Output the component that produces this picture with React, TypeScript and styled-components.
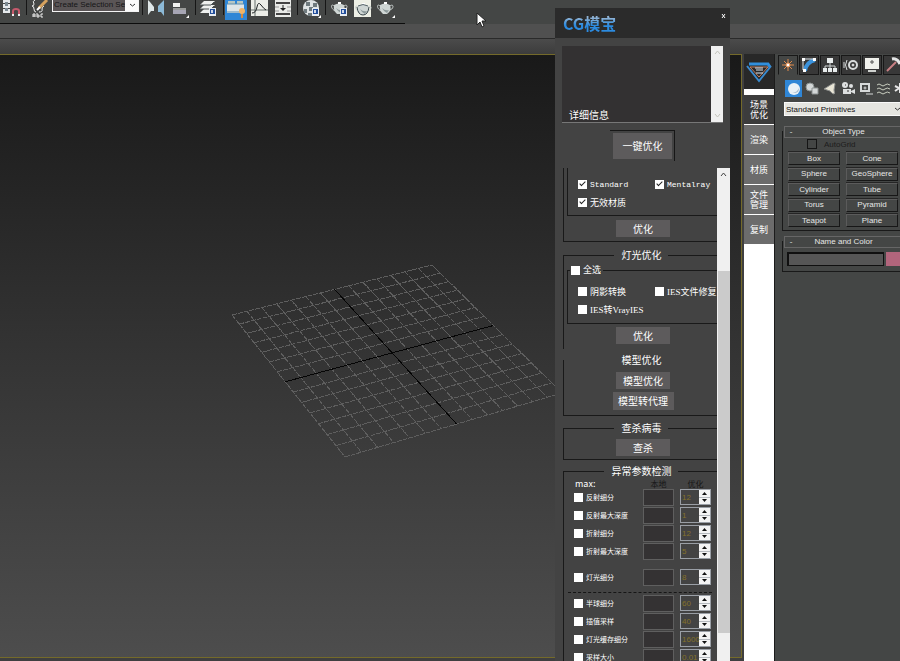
import React, { useState } from "react";
import styled, { createGlobalStyle, css } from "styled-components";

const sans = `"Liberation Sans", "Noto Sans CJK SC", sans-serif`;
const cjk = `"Noto Sans CJK SC", "Liberation Sans", sans-serif`;

const GlobalStyle = createGlobalStyle`
  *, *::before, *::after { box-sizing: border-box; }
  html, body { margin: 0; overflow: hidden; background: #444645; }
  body { font-family: ${sans}; font-size: 8px; color: #e6e6e6; }
  button, input, select { font: inherit; color: inherit; margin: 0; padding: 0; border: 0; border-radius: 0; min-width: 0; }
  fieldset { min-width: 0; margin: 0; padding: 0; }
  svg { display: block; flex: none; }
`;

const Shell = styled.div`
  position: relative;
  display: flex;
  flex-direction: column;
  height: 100vh;
  overflow: hidden;
`;

/* ---------- top bars ---------- */

const Toolbar = styled.header`
  display: flex;
  align-items: flex-start;
  height: 24px;
  background: #444645;
`;

const Tools = styled.div`
  display: flex;
  height: 24px;
  padding-right: 7px;
  border-bottom: 1px solid #0c0c0c;
`;

const Tool = styled.button<{ $w: number; $active?: boolean }>`
  display: flex;
  justify-content: center;
  width: ${(p) => p.$w}px;
  height: 20px;
  background: ${(p) => (p.$active ? "#2f86d6" : "transparent")};
`;

const Divider = styled.span<{ $w: number }>`
  width: ${(p) => p.$w}px;
  height: 15px;
  background: linear-gradient(#161616, #161616) center / 1px 100% no-repeat;
`;

const SelectWrap = styled.label`
  position: relative;
  display: block;
`;

const SetSelect = styled.select`
  appearance: none;
  display: block;
  width: 87px;
  height: 12px;
  padding: 0 13px 2px 1px;
  border: 1px solid #f4f4f4;
  border-top: 0;
  background: linear-gradient(90deg, #5a5556 72px, #fbfbfb 72px);
  color: #161616;
  line-height: 10px;
`;

const Chevron = styled.svg<{ $top: number; $right: number }>`
  position: absolute;
  top: ${(p) => p.$top}px;
  right: ${(p) => p.$right}px;
  pointer-events: none;
`;

const Ribbon = styled.div`
  height: 15px;
  background: #505050;
  border-bottom: 1px solid #2a2a2a;
`;

const RibbonFade = styled.div`
  height: 15px;
  background: linear-gradient(#4b4b4b, #3c3c3c);
`;

/* ---------- main row ---------- */

const Main = styled.main`
  flex: 1;
  display: flex;
  min-height: 0;
`;

const ViewColumn = styled.div`
  flex: 1;
  display: flex;
  padding: 0 2px 3px 0;
  background: #3f3f40;
`;

const Viewport = styled.section`
  flex: 1;
  overflow: hidden;
  border: solid #746a2a;
  border-width: 1px 1px 1px 0;
  background: linear-gradient(#191919, #343434 50%, #4d4d4d);
`;

const TabStrip = styled.nav`
  display: flex;
  flex-direction: column;
  gap: 1px;
  width: 30px;
  background: #fff;
`;

const StripLogo = styled.div`
  display: flex;
  justify-content: center;
  align-items: center;
  height: 35px;
  margin-bottom: 5px;
  background: #282828;
`;

const StripTab = styled.button<{ $active?: boolean }>`
  height: 29px;
  padding: 0 5px;
  background: ${(p) => (p.$active ? "#3c3c3c" : "#6c6c6c")};
  color: #fff;
  font-family: ${cjk};
  font-size: 9px;
  line-height: 10px;
`;

const CommandPanel = styled.aside`
  width: 126px;
  overflow: hidden;
  border-left: 1px solid #1c1c1c;
  background: #444645;
`;

const PanelTabs = styled.div`
  display: flex;
  gap: 1px;
  height: 21px;
  padding: 1px 0 0 3px;
`;

const PanelTab = styled.button<{ $active?: boolean }>`
  flex: none;
  display: flex;
  align-items: center;
  justify-content: center;
  width: 20px;
  background: ${(p) => (p.$active ? "#444645" : "#383838")};
  border: 1px solid #181818;
  ${(p) => p.$active && css`border-bottom-color: #444645;`}
`;

const Categories = styled.div`
  display: flex;
  gap: 1px;
  padding: 5px 0 5px 10px;
`;

const Category = styled.button<{ $active?: boolean }>`
  flex: none;
  display: flex;
  align-items: center;
  justify-content: center;
  width: 17px;
  height: 17px;
  background: ${(p) => (p.$active ? "#2f86d6" : "transparent")};
`;

const PrimitiveSelect = styled.select`
  appearance: none;
  display: block;
  width: 117px;
  height: 14px;
  margin-left: 9px;
  padding: 0 12px 0 1px;
  border: 1px solid #fafafa;
  background: #e5e5e0;
  color: #111;
`;

const Rollout = styled.section<{ $gap: number; $pad: number }>`
  display: flow-root;
  margin: ${(p) => p.$gap}px 0 0 7px;
  border: solid #191919;
  border-width: 0 0 1px 1px;
  padding: 0 0 ${(p) => p.$pad}px 1px;
`;

const RolloutHead = styled.button`
  display: grid;
  grid-template-columns: 6px 1fr;
  align-items: center;
  width: 118px;
  height: 12px;
  margin-top: -5px;
  padding: 0 8px 0 3px;
  border: 1px solid #666;
  background: #444645;
  text-align: center;
  line-height: 8px;
`;

const AutoGrid = styled.label`
  display: flex;
  align-items: center;
  gap: 7px;
  height: 10px;
  margin-top: 1px;
  padding-left: 23px;
  color: #1c1c1c;
`;

const DarkCheck = styled.input`
  appearance: none;
  width: 10px;
  height: 10px;
  border: 1px solid #151515;
`;

const ObjectGrid = styled.div`
  display: grid;
  grid-template-columns: 52px 52px;
  column-gap: 6px;
  align-content: space-between;
  height: 75px;
  margin-top: 3px;
  padding-left: 4px;
`;

const ObjectButton = styled.button`
  height: 13px;
  border: 1px solid #171717;
  border-top-color: #5b5b5b;
  border-left-color: #5b5b5b;
  background: #444645;
  line-height: 10px;
  box-shadow: 0 -1px 0 #252525;
`;

const NameRow = styled.div`
  display: flex;
  gap: 2px;
  margin-top: 4px;
  padding-left: 3px;
`;

const NameInput = styled.input`
  flex: none;
  width: 97px;
  height: 14px;
  border: 2px solid #101010;
  border-right-width: 1px;
  border-bottom-width: 1px;
  background: #565656;
`;

const Swatch = styled.button`
  flex: none;
  width: 14px;
  height: 14px;
  background: #b2657c;
`;

/* ---------- floating tool window ---------- */

const FloatWindow = styled.section`
  position: absolute;
  top: 8px;
  right: 170px;
  bottom: 0;
  display: flex;
  flex-direction: column;
  width: 175px;
  background: #434343;
  font-family: ${cjk};
  font-size: 10px;
  color: #fff;
`;

const TitleBar = styled.header`
  display: flex;
  justify-content: space-between;
  align-items: flex-start;
  height: 30px;
  padding: 5px 4px 0 8px;
  background: #2b2b2b;
`;

const Brand = styled.h1`
  margin: 0;
  font-size: 16px;
  line-height: 20px;
  font-weight: 700;
  color: transparent;
  background: linear-gradient(#8fb3d6 25%, #2c8be0 60%);
  background-clip: text;
`;

const CloseButton = styled.button`
  background: transparent;
`;

const InfoBox = styled.div`
  display: flex;
  justify-content: space-between;
  height: 77px;
  margin: 8px 7px 0;
  border-bottom: 1px solid #777;
  background: #333132;
`;

const InfoText = styled.p`
  align-self: flex-end;
  margin: 0;
  padding: 0 0 0 7px;
  line-height: 14px;
`;

const Track = styled.div<{ $w: number }>`
  flex: none;
  display: flex;
  flex-direction: column;
  justify-content: space-between;
  align-items: center;
  width: ${(p) => p.$w}px;
  padding: 4px 0;
  background: #f0f0f0;
`;

const Thumb = styled.div`
  width: 12px;
  height: 362px;
  margin: auto 0 24px;
  background: #cbcbcb;
`;

const MainAction = styled.div`
  display: flex;
  align-self: center;
  margin: 7px 0 7px;
  padding: 2px 2px 2px 3px;
  border: solid #171717;
  border-width: 1px 1px 0 0;
`;

const Action = styled.button<{ $w?: number; $h?: number }>`
  display: block;
  width: ${(p) => p.$w ?? 54}px;
  height: ${(p) => p.$h ?? 17}px;
  margin: 0 auto;
  background: #5d5b5c;
  color: #fff;
  line-height: 14px;
`;

const ScrollRow = styled.div`
  flex: 1;
  display: flex;
  min-height: 0;
`;

const ScrollBody = styled.div`
  flex: 1;
  overflow: hidden;
  padding-left: 8px;
`;

const Group = styled.fieldset<{ $gap?: number; $openTop?: boolean; $openBottom?: boolean; $pad: string }>`
  margin-top: ${(p) => p.$gap ?? 0}px;
  padding: ${(p) => p.$pad};
  border: solid #191919;
  border-width: ${(p) => (p.$openTop ? 0 : 1)}px 0 ${(p) => (p.$openBottom ? 0 : 1)}px 1px;
`;

const GroupTitle = styled.legend`
  margin: 0 auto;
  padding: 0 6px 0 8px;
  line-height: 14px;
`;

const ActionStack = styled.div<{ $top: number }>`
  display: grid;
  gap: 3px;
  margin-top: ${(p) => p.$top}px;
  padding-left: 5px;
`;

const Inner = styled.fieldset<{ $openTop?: boolean }>`
  margin-left: 3px;
  padding: ${(p) => (p.$openTop ? "7px 0 4px 10px" : "6px 0 5px 10px")};
  margin-top: ${(p) => (p.$openTop ? 0 : 2)}px;
  border: solid #191919;
  border-width: ${(p) => (p.$openTop ? 0 : 1)}px 0 1px 1px;
`;

const InnerTitle = styled.legend`
  margin-left: -8px;
  padding: 0 2px 0 1px;
  line-height: 12px;
`;

const OptionGrid = styled.div`
  display: grid;
  grid-template-columns: 77px 1fr;
  grid-auto-rows: 18px;
`;

const OptionLabel = styled.label<{ $mono?: boolean }>`
  display: flex;
  align-items: center;
  gap: 3px;
  overflow: hidden;
  white-space: nowrap;
  font-family: ${(p) => (p.$mono ? `"Liberation Mono"` : `"Liberation Serif"`)}, "Noto Sans CJK SC", sans-serif;
  font-size: ${(p) => (p.$mono ? 8 : 9)}px;
`;

const Check = styled.input`
  appearance: none;
  flex: none;
  display: flex;
  justify-content: center;
  width: 9px;
  height: 9px;
  background: #fff;
  &:checked::after {
    content: "";
    width: 3px;
    height: 6px;
    border: solid #222;
    border-width: 0 1px 1px 0;
    transform: rotate(45deg);
  }
`;

const ParamLine = styled.div<{ $gap?: number; $head?: boolean }>`
  display: grid;
  grid-template-columns: 69px 31px 31px;
  column-gap: 6px;
  align-items: center;
  height: ${(p) => (p.$head ? 8 : 18)}px;
  margin-top: ${(p) => p.$gap ?? 0}px;
  padding-left: 4px;
  ${(p) => p.$head && css`
    line-height: 8px;
    font-size: 8px;
    text-align: center;
    color: #161616;
  `}
`;

const EngineName = styled.span`
  padding-left: 7px;
  color: #fff;
  font-size: 9px;
  text-align: left;
`;

const ParamName = styled.label`
  display: flex;
  align-items: center;
  gap: 3px;
  padding-left: 6px;
  font-size: 7px;
  white-space: nowrap;
`;

const LocalValue = styled.output`
  height: 17px;
  border: 1px solid #5f5f5f;
  background: #343233;
`;

const Spin = styled.div`
  display: grid;
  grid-template-columns: 1fr 11px;
  height: 16px;
  border: 1px solid #9a9fa6;
`;

const SpinInput = styled.input`
  width: 100%;
  padding-left: 1px;
  background: transparent;
  color: #83722a;
  font-family: ${sans};
  font-size: 8px;
`;

const Steppers = styled.div`
  display: grid;
  grid-template-rows: 1fr 1fr;
  gap: 1px;
  background: #b4b8bd;
`;

const Step = styled.button`
  display: flex;
  align-items: center;
  justify-content: center;
  background: #f3f3f3;
`;

const DashedRule = styled.hr`
  margin: 6px 5px 1px 4px;
  border: 0;
  border-top: 1px dashed #161616;
`;

const Pointer = styled.svg`
  position: absolute;
  left: 476px;
  top: 13px;
`;

/* ---------- drawings ---------- */

type Pt = [number, number];
const corners: Pt[] = [[232, 260], [432, 210], [562, 338], [345, 402]];

function project(u: number, v: number): Pt {
  const [[x0, y0], [x1, y1], [x2, y2], [x3, y3]] = corners;
  const dx1 = x1 - x2, dx2 = x3 - x2, sx = x0 - x1 + x2 - x3;
  const dy1 = y1 - y2, dy2 = y3 - y2, sy = y0 - y1 + y2 - y3;
  const det = dx1 * dy2 - dx2 * dy1;
  const g = (sx * dy2 - dx2 * sy) / det;
  const h = (dx1 * sy - sx * dy1) / det;
  const w = g * u + h * v + 1;
  return [
    ((x1 - x0 + g * x1) * u + (x3 - x0 + h * x3) * v + x0) / w,
    ((y1 - y0 + g * y1) * u + (y3 - y0 + h * y3) * v + y0) / w,
  ];
}

function gridLine(a: Pt, b: Pt) {
  return `M${a[0].toFixed(1)} ${a[1].toFixed(1)}L${b[0].toFixed(1)} ${b[1].toFixed(1)}`;
}

function GroundGrid() {
  const steps = Array.from({ length: 15 }, (_, i) => i).filter((i) => i !== 7);
  const minor = steps
    .map((i) => gridLine(project(i / 14, 0), project(i / 14, 1)) + gridLine(project(0, i / 14), project(1, i / 14)))
    .join("");
  const axes = gridLine(project(0.5, 0), project(0.5, 1)) + gridLine(project(0, 0.5), project(1, 0.5));
  return (
    <svg width="100%" height="100%" fill="none" shapeRendering="crispEdges">
      <path d={minor} stroke="#5e5e5e" strokeDasharray="5 1" />
      <path d={axes} stroke="#050505" />
    </svg>
  );
}

const corner = <path d="M19 15v3h-3z" fill="#fff" />;
const sheet = (
  <g>
    <path d="M10 8h7v8h-7z" fill="#e9edf2" />
    <path d="M11 9h5v5h-5z" fill="#234f9c" />
    <path d="M12 10h2v3h-2z" fill="#cfd9ea" />
  </g>
);
const pot = (
  <g>
    <path d="M4 6c-3-3-4 2 1 5M14 6c4-3 4 3 0 4" stroke="#c9cfcd" fill="none" />
    <path d="M4 5q5-3 10 0q2 6-3 9H7Q3 11 4 5z" fill="#cfd6d4" />
    <path d="M8 2h3v2H8z" fill="#fff" />
    <path d="M6 8q2 4 5 5l2-3q-4 1-7-2z" fill="#8d9a9b" />
  </g>
);

const art: Record<string, React.ReactNode> = {
  snap: (
    <g>
      <path d="M1 0h7v3H1zM1 4h7v4H1zM1 9h7v4H1z" fill="#e6eaec" />
      <path d="M3 2h3v4H3zM3 8h3v3H3z" fill="#7d8b93" />
      <path d="M11 14v-3q0-2 3-2t3 2v3" fill="none" stroke="#c55a6c" strokeWidth="2" />
      <path d="M10 14h2v2h-2zM16 14h2v2h-2z" fill="#eee" />
    </g>
  ),
  named: (
    <g fill="none" stroke="#efefef">
      <path d="M5 0Q2 1 4 4q0 2-2 2q2 0 2 3q0 3 2 3" />
      <path d="M9 12q4 0 3-3q0-2 2-3" />
      <path d="M9 8l8-8" stroke="#d7a35e" strokeWidth="3" />
      <path d="M7 10l3-3" stroke="#fff" strokeWidth="2" />
      <path d="M3 17v-3h2v3M3 16h2M7 13v4h2v-2H7M13 14h-2v3h2" />
    </g>
  ),
  mirror: (
    <g>
      <path d="M2 0v15l3-4h3V7L4 2z" fill="#dfe7e8" />
      <path d="M18 0v16l-3-4h-3V6l3-3z" fill="#8cb9d6" />
    </g>
  ),
  align: (
    <g>
      <path d="M3 3h7v4H3z" fill="#f1f1ee" />
      <path d="M3 10h13v4H3z" fill="#a6a5b4" />
      <path d="M3 9h13" stroke="#eee" />
      {corner}
    </g>
  ),
  layers: (
    <g>
      <path d="M5 1h11l-4 4H1zM5 5h11l-4 4H1zM5 9h9l-3 4H1z" fill="#eef0ee" />
      <path d="M1 5h11l3-3M1 9h11l3-3" stroke="#4e5557" fill="none" />
      {sheet}
    </g>
  ),
  ribbon: (
    <g>
      <path d="M1 4h17v9H1z" fill="#dfe6e8" />
      <path d="M2 1h7v3H2zM11 1h6v3h-6z" fill="#b7c7c4" />
      <path d="M1 4h17M1 12h17" stroke="#5f8eae" />
      <circle cx="16" cy="11" r="3" fill="#f1b466" />
      <path d="M15 14h2v4h-2z" fill="#d98a3b" />
    </g>
  ),
  curve: (
    <g>
      <path d="M1 0h17v16H1z" fill="#eceee8" />
      <path d="M5 0v16M1 10h17" stroke="#66706d" />
      <path d="M2 13q4 0 5-6t4-2t5 5" stroke="#1e2224" fill="none" />
    </g>
  ),
  schematic: (
    <g>
      <path d="M2 0h16v17H2z" fill="#e9ebe8" />
      <path d="M3 3h14M3 14h14" stroke="#444" strokeWidth="2" />
      <path d="M10 5v4" stroke="#222" />
      <path d="M7 8h6l-3 3z" fill="#222" />
      <path d="M2 7h4M14 7h4M2 11h4M14 11h4" stroke="#999" />
    </g>
  ),
  material: (
    <g>
      <circle cx="9" cy="8" r="8" fill="#dfe3e4" />
      <path d="M4 2h4v4H4zM11 3h4v4h-4zM7 7h4v4H7zM2 9h3v4H2zM6 13h4v3H6z" fill="#6f7a7e" />
      {sheet}
      {corner}
    </g>
  ),
  setup: <g>{pot}{sheet}</g>,
  frame: (
    <g>
      <path d="M1 0h17v17H1z" fill="#eef0e6" />
      <g transform="translate(1 1)">{pot}</g>
      <path d="M4 7q1 8 6 8t6-8" stroke="#39464b" fill="none" />
      <path d="M5 6q5-3 10 0" stroke="#56646a" fill="none" />
    </g>
  ),
  render: <g>{pot}{corner}</g>,
  create: (
    <g stroke="#e08a4c">
      <path d="M9 3v12M3 9h12M5 5l8 8M13 5l-8 8" />
      <circle cx="9" cy="9" r="2" fill="#fff" />
    </g>
  ),
  modify: (
    <g fill="none">
      <path d="M5 15Q6 6 15 4" stroke="#3c93dd" strokeWidth="4" />
      <path d="M3 3h11M3 3v11" stroke="#dfe8ee" />
      <path d="M2 2h3v3H2zM13 2h3v3h-3zM3 13h3v3H3z" fill="#fff" />
    </g>
  ),
  hierarchy: (
    <g fill="#e8ecec">
      <path d="M6 2h6v5H6zM2 12h4v4H2zM7 12h4v4H7zM12 12h4v4h-4z" />
      <path d="M9 7v5M4 12v-2h10v2" stroke="#cfd4d4" fill="none" />
    </g>
  ),
  motion: (
    <g fill="none" stroke="#d9dddd">
      <circle cx="11" cy="9" r="4" strokeWidth="2" />
      <circle cx="11" cy="9" r="1" fill="#fff" />
      <path d="M5 4q-3 5 0 10M2 6v6" />
    </g>
  ),
  display: (
    <g>
      <path d="M2 2h14v11H2z" fill="#f0f1ec" />
      <path d="M5 14h8v2H5z" fill="#cfd2cf" />
      <path d="M9 4v4M7 6h4" stroke="#555" />
    </g>
  ),
  utility: (
    <g fill="none">
      <path d="M3 15L12 6" stroke="#c87f83" strokeWidth="2" />
      <path d="M8 3q5-1 8 5" stroke="#e4e6e6" strokeWidth="3" />
    </g>
  ),
  geometry: <g><circle cx="9" cy="9" r="6" fill="#e9f1f6" /><path d="M6 12q5 2 8-4q0 7-8 4z" fill="#a8bccb" /></g>,
  shapes: (
    <g fill="#d3d7d7" stroke="#8c9292">
      <circle cx="7" cy="7" r="4" />
      <path d="M9 8h6v6H9z" />
    </g>
  ),
  lights: <path d="M3 9l8-5q3-2 3 0l-1 6q1 4 0 4q-2 0-4-3z" fill="#e9e6d6" stroke="#8d8f8d" />,
  cameras: (
    <g fill="#dde0e0">
      <circle cx="6" cy="5" r="3" />
      <circle cx="12" cy="6" r="2" />
      <path d="M4 9h8v5H4zM12 11l4-2v5l-4-2z" />
      <path d="M6 5h1M8 11h2" stroke="#333" />
    </g>
  ),
  helpers: (
    <g fill="none" stroke="#d7dada">
      <path d="M4 4h8v7H4z" strokeWidth="2" />
      <path d="M9 14h7" />
      <circle cx="8" cy="8" r="1" />
    </g>
  ),
  warps: <path d="M2 5q2-2 4 0t4 0t5 0M2 9q2-2 4 0t4 0t5 0M2 13q2-2 4 0t4 0t5 0" fill="none" stroke="#c9cec0" />,
  systems: <path d="M7 3v10M2 6l10 5M2 11l9-6" stroke="#e6e6e6" strokeWidth="2" />,
};

function Art({ name, size = 20 }: { name: string; size?: number }) {
  return (
    <svg width={size} height={size} viewBox={`0 0 ${size} ${size}`} aria-hidden="true">
      {art[name]}
    </svg>
  );
}

function TriangleLogo() {
  return (
    <svg width="26" height="22" viewBox="0 0 26 22" fill="none" aria-hidden="true">
      <path d="M3 3h19l2 3" stroke="#318fdd" strokeWidth="3" />
      <path d="M1 5l12 15L25 5" stroke="#3a8bd0" strokeWidth="2" />
      <path d="M4 6l9 10l9-10z" stroke="#c58263" />
      <path d="M9 7h8M10 9h7M10 12h7" stroke="#d8e6f2" />
    </svg>
  );
}

function Arrow({ up, color = "#444" }: { up?: boolean; color?: string }) {
  return (
    <svg width="7" height="5" viewBox="0 0 7 5" fill="none" aria-hidden="true">
      <path d={up ? "M1 4l2.500-3L6 4" : "M1 1l2.500 3L6 1"} stroke={color} />
    </svg>
  );
}

/* ---------- parts ---------- */

function Option({ text, checked = false, mono = false }: { text: string; checked?: boolean; mono?: boolean }) {
  const [on, setOn] = useState(checked);
  return (
    <OptionLabel $mono={mono}>
      <Check type="checkbox" checked={on} onChange={() => setOn(!on)} />
      {text}
    </OptionLabel>
  );
}

function Param({ name, value, gap }: { name: string; value: string; gap?: number }) {
  return (
    <ParamLine $gap={gap}>
      <ParamName>
        <Check type="checkbox" />
        {name}
      </ParamName>
      <LocalValue />
      <Spin>
        <SpinInput type="text" defaultValue={value} aria-label={name} />
        <Steppers>
          <Step aria-label="+">
            <svg width="5" height="3"><path d="M0 3h5L2.500 0z" fill="#111" /></svg>
          </Step>
          <Step aria-label="-">
            <svg width="5" height="3"><path d="M0 0h5L2.500 3z" fill="#111" /></svg>
          </Step>
        </Steppers>
      </Spin>
    </ParamLine>
  );
}

function OptimizerWindow() {
  return (
    <FloatWindow>
      <TitleBar>
        <Brand>CG模宝</Brand>
        <CloseButton aria-label="关闭">
          <svg width="5" height="7"><path d="M1 1l3 4M4 1L1 5" stroke="#fff" /></svg>
        </CloseButton>
      </TitleBar>
      <InfoBox>
        <InfoText>详细信息</InfoText>
        <Track $w={12}>
          <Arrow up color="#c4c4bc" />
          <Arrow color="#c4c4bc" />
        </Track>
      </InfoBox>
      <MainAction>
        <Action $w={59} $h={26}>一键优化</Action>
      </MainAction>
      <ScrollRow>
        <ScrollBody>
          <Group $openTop $pad="0 0 4px">
            <Inner $openTop>
              <OptionGrid>
                <Option text="Standard" checked mono />
                <Option text="Mentalray" checked mono />
                <Option text="无效材质" checked />
              </OptionGrid>
            </Inner>
            <ActionStack $top={4}><Action>优化</Action></ActionStack>
          </Group>
          <Group $gap={6} $openBottom $pad="0 0 5px">
            <GroupTitle>灯光优化</GroupTitle>
            <Inner>
              <InnerTitle><Option text="全选" /></InnerTitle>
              <OptionGrid>
                <Option text="阴影转换" />
                <Option text="IES文件修复" />
                <Option text="IES转VrayIES" />
              </OptionGrid>
            </Inner>
            <ActionStack $top={3}><Action>优化</Action></ActionStack>
          </Group>
          <Group $gap={4} $openTop $pad="0 0 5px">
            <GroupTitle>模型优化</GroupTitle>
            <ActionStack $top={5}>
              <Action>模型优化</Action>
              <Action $w={61} $h={18}>模型转代理</Action>
            </ActionStack>
          </Group>
          <Group $gap={5} $pad="0 0 3px">
            <GroupTitle>查杀病毒</GroupTitle>
            <ActionStack $top={4}><Action>查杀</Action></ActionStack>
          </Group>
          <Group $gap={4} $openBottom $pad="0">
            <GroupTitle>异常参数检测</GroupTitle>
            <ParamLine $head $gap={2}>
              <EngineName>max:</EngineName>
              <span>本地</span>
              <span>优化</span>
            </ParamLine>
            <Param name="反射细分" value="12" />
            <Param name="反射最大深度" value="1" />
            <Param name="折射细分" value="12" />
            <Param name="折射最大深度" value="5" />
            <Param name="灯光细分" value="8" gap={8} />
            <DashedRule />
            <Param name="半球细分" value="60" />
            <Param name="插值采样" value="40" />
            <Param name="灯光缓存细分" value="1600" />
            <Param name="采样大小" value="0.01" />
          </Group>
        </ScrollBody>
        <Track $w={13}>
          <Arrow up />
          <Thumb />
        </Track>
      </ScrollRow>
    </FloatWindow>
  );
}

const objects = ["Box", "Cone", "Sphere", "GeoSphere", "Cylinder", "Tube", "Torus", "Pyramid", "Teapot", "Plane"];
const panelTabs = ["create", "modify", "hierarchy", "motion", "display", "utility"];
const categories = ["geometry", "shapes", "lights", "cameras", "helpers", "warps", "systems"];
const stripTabs = ["场景优化", "渲染", "材质", "文件管理", "复制"];

export default function App() {
  return (
    <>
      <GlobalStyle />
      <Shell>
        <Toolbar>
          <Tools>
            <Tool $w={24} aria-label="Snap"><Art name="snap" /></Tool>
            <Divider $w={4} />
            <Tool $w={24} aria-label="Named sets"><Art name="named" /></Tool>
            <SelectWrap>
              <SetSelect aria-label="Selection set"><option>Create Selection Se</option></SetSelect>
              <Chevron $top={3} $right={3} width="7" height="5" fill="none"><path d="M1 1l2.500 2L6 1" stroke="#333" /></Chevron>
            </SelectWrap>
            <Divider $w={6} />
            <Tool $w={22} aria-label="Mirror"><Art name="mirror" /></Tool>
            <Tool $w={26} aria-label="Align"><Art name="align" /></Tool>
            <Divider $w={4} />
            <Tool $w={24} aria-label="Layers"><Art name="layers" /></Tool>
            <Divider $w={4} />
            <Tool $w={22} $active aria-label="Ribbon"><Art name="ribbon" /></Tool>
            <Tool $w={25} aria-label="Curve editor"><Art name="curve" /></Tool>
            <Tool $w={22} aria-label="Schematic view"><Art name="schematic" /></Tool>
            <Divider $w={6} />
            <Tool $w={23} aria-label="Material editor"><Art name="material" /></Tool>
            <Divider $w={4} />
            <Tool $w={25} aria-label="Render setup"><Art name="setup" /></Tool>
            <Tool $w={22} aria-label="Rendered frame"><Art name="frame" /></Tool>
            <Tool $w={24} aria-label="Render"><Art name="render" /></Tool>
          </Tools>
        </Toolbar>
        <Ribbon />
        <RibbonFade />
        <Main>
          <ViewColumn>
            <Viewport><GroundGrid /></Viewport>
          </ViewColumn>
          <TabStrip>
            <StripLogo><TriangleLogo /></StripLogo>
            {stripTabs.map((t, i) => (
              <StripTab key={t} $active={i === 0}>{t}</StripTab>
            ))}
          </TabStrip>
          <CommandPanel>
            <PanelTabs>
              {panelTabs.map((n, i) => (
                <PanelTab key={n} $active={i === 0} aria-label={n}><Art name={n} size={18} /></PanelTab>
              ))}
            </PanelTabs>
            <Categories>
              {categories.map((n, i) => (
                <Category key={n} $active={i === 0} aria-label={n}><Art name={n} size={18} /></Category>
              ))}
            </Categories>
            <SelectWrap>
              <PrimitiveSelect aria-label="Category"><option>Standard Primitives</option></PrimitiveSelect>
              <Chevron $top={5} $right={-1} width="7" height="5" fill="none"><path d="M1 1l2.500 2L6 1" stroke="#333" /></Chevron>
            </SelectWrap>
            <Rollout $gap={15} $pad={3}>
              <RolloutHead><span>-</span><span>Object Type</span></RolloutHead>
              <AutoGrid><DarkCheck type="checkbox" />AutoGrid</AutoGrid>
              <ObjectGrid>
                {objects.map((o) => <ObjectButton key={o}>{o}</ObjectButton>)}
              </ObjectGrid>
            </Rollout>
            <Rollout $gap={10} $pad={5}>
              <RolloutHead><span>-</span><span>Name and Color</span></RolloutHead>
              <NameRow>
                <NameInput type="text" aria-label="Name" />
                <Swatch aria-label="Color" />
              </NameRow>
            </Rollout>
          </CommandPanel>
        </Main>
        <OptimizerWindow />
        <Pointer width="10" height="16" aria-hidden="true">
          <path d="M1 0v12l3-3l2 5l2-1l-2-5h4z" fill="#fff" stroke="#222" />
        </Pointer>
      </Shell>
    </>
  );
}
